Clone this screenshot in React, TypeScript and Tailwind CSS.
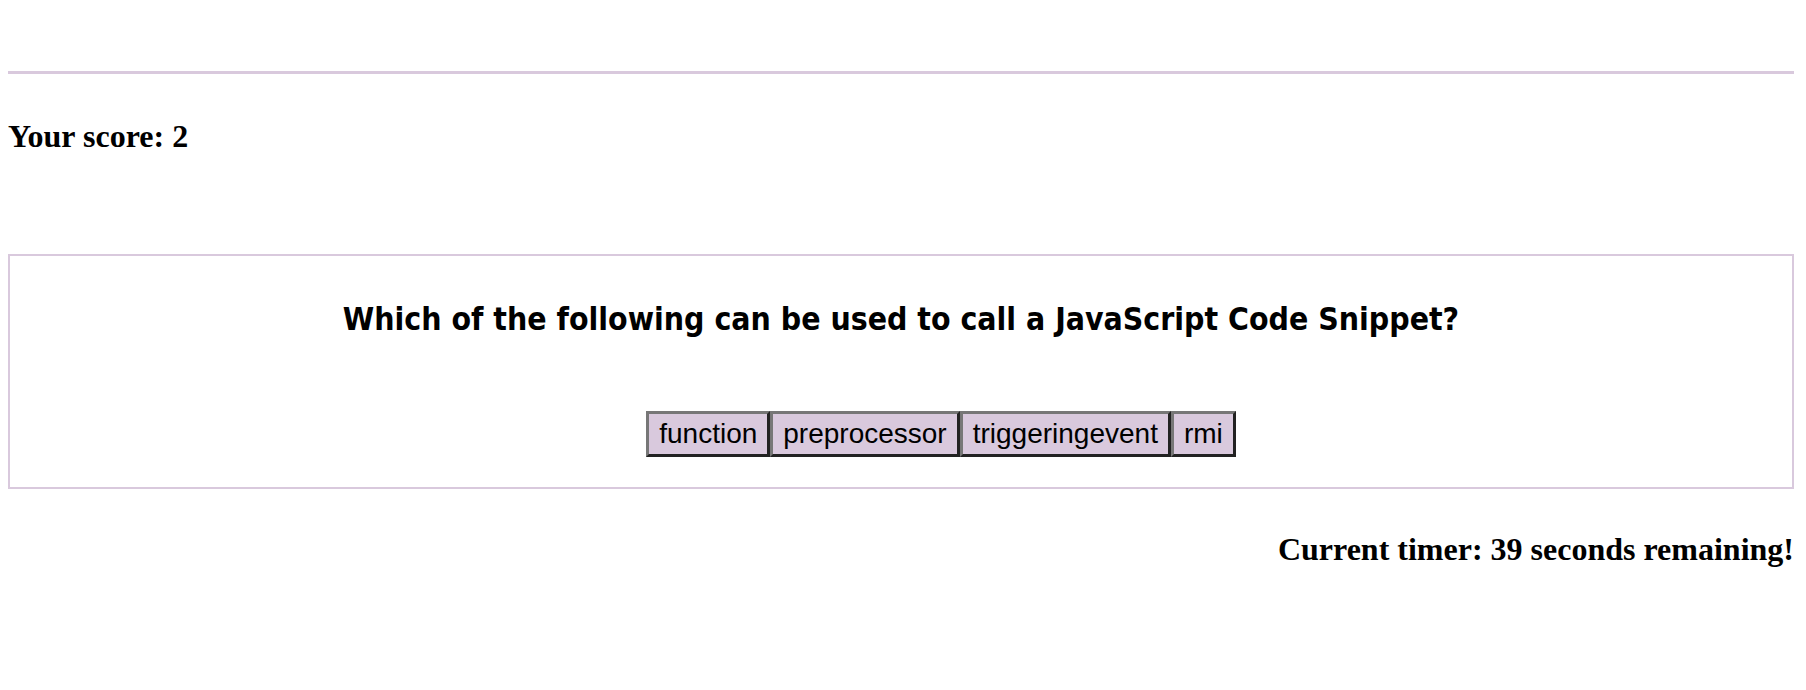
import React from 'react';

const QuizScreen: React.FC = () => {
    const question = 'Which of the following can be used to call a JavaScript Code Snippet?';
    const answers = ['function', 'preprocessor', 'triggeringevent', 'rmi'];

    return (
        <div className="min-h-screen bg-white pt-[71px] pl-2 pr-3 text-black">
            {/* Divider */}
            <div className="h-[3px] bg-[#d9c9dd]" />

            {/* Score */}
            <h1 className="mt-[44px] text-[32px] leading-[36px] font-bold font-['Liberation_Serif',serif]">
                Your score: 2
            </h1>

            {/* Question card */}
            <section className="mt-[100px] border-2 border-[#d9c9dd] pt-[45px] pb-[30px]">
                <h2 className="text-center text-[31.7px] leading-[37px] font-bold font-stretch-condensed font-['DejaVu_Sans_Condensed','DejaVu_Sans',sans-serif]">
                    {question}
                </h2>
                <div className="mt-[73px] flex justify-center pl-[80px]">
                    {answers.map((answer) => (
                        <button
                            key={answer}
                            className="border-[3px] border-t-[#777777] border-l-[#777777] border-b-[#222222] border-r-[#222222] bg-[#d9c9dd] px-[10px] py-[4px] text-[28px] leading-[32px] font-['Liberation_Sans',Arial,sans-serif] text-black"
                        >
                            {answer}
                        </button>
                    ))}
                </div>
            </section>

            {/* Timer */}
            <h1 className="mt-[42px] text-right text-[32px] leading-[36px] font-bold font-['Liberation_Serif',serif]">
                Current timer: 39 seconds remaining!
            </h1>
        </div>
    );
};

export default QuizScreen;
